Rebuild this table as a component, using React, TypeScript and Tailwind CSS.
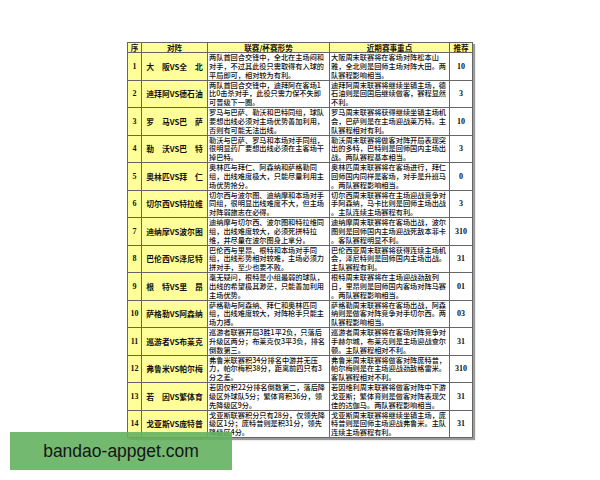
import React from "react";

type Row = { n: string; m: string; a: string[]; b: string[]; r: string };

const rows: Row[] = [
  { n: "1", m: "大　阪VS全　北", a: ["两队首回合交锋中，全北在主场闷和", "对手，不过其此役只需取得有入球的", "平局即可，相对较为有利。"], b: ["大阪周末联赛将在客场对阵松本山", "雅，全北则是回师主场对阵大田。两", "队赛程影响相当。"], r: "10" },
  { n: "2", m: "迪拜阿VS德石油", a: ["两队首回合交锋中，迪拜阿在客场1", "比0击杀对手，此役只需力保不失即", "可晋级下一圈。"], b: ["迪拜阿周末联赛将继续坐镇主场，德", "石油则是回国后继续做客，赛程显然", "不利。"], r: "3" },
  { n: "3", m: "罗　马VS巴　萨", a: ["罗马与巴萨、勒沃和巴特同组，球队", "要想出线必须对主场优势善加利用，", "否则有可能无法出线。"], b: ["罗马周末联赛将获得继续坐镇主场机", "会，巴萨则是在主场迎战莱万特。主", "队赛程相对有利。"], r: "10" },
  { n: "4", m: "勒　沃VS巴　特", a: ["勒沃与巴萨、罗马和本场对手同组，", "很明显药厂要想出线必须在主客场干", "掉巴特。"], b: ["勒沃周末联赛将做客对阵开局表现突", "出的多特，巴特则是回师国内主场出", "战。两队赛程基本相当。"], r: "3" },
  { n: "5", m: "奥林匹VS拜　仁", a: ["奥林匹与拜仁、阿森纳和萨格勒同", "组，出线难度极大，只能尽量利用主", "场优势抢分。"], b: ["奥林匹周末联赛将在客场进行，拜仁", "回师国内同样是客场，对手是升班马", "。两队赛程影响相当。"], r: "0" },
  { n: "6", m: "切尔西VS特拉维", a: ["切尔西与波尔图、迪纳摩和本场对手", "同组，很明显出线难度不大，但主场", "对阵弱旅志在必得。"], b: ["切尔西周末联赛将在主场迎战竞争对", "手阿森纳，马卡比则是回师主场出战", "。主队连续主场赛程有利。"], r: "3" },
  { n: "7", m: "迪纳摩VS波尔图", a: ["迪纳摩与切尔西、波尔图和特拉维同", "组，出线难度较大，必须死拼特拉", "维，并尽量在波尔图身上拿分。"], b: ["迪纳摩周末联赛将在客场出战，波尔", "图则是回师国内主场迎战死敌本菲卡", "。客队赛程明显不利。"], r: "310" },
  { n: "8", m: "巴伦西VS泽尼特", a: ["巴伦西与里昂、根特和本场对手同", "组，出线形势相对较难，主场必须力", "拼对手，至少也要不败。"], b: ["巴伦西亚周末联赛将获得连续主场机", "会，泽尼特则是回师国内主场出战。", "主队赛程有利。"], r: "31" },
  { n: "9", m: "根　特VS里　昂", a: ["毫无疑问，根特是小组最弱的球队，", "出线的希望极其渺茫，只能善加利用", "主场优势。"], b: ["根特周末联赛将在主场迎战劲敌列", "日，里昂则是回师国内客场对阵马赛", "。两队赛程影响相当。"], r: "01" },
  { n: "10", m: "萨格勒VS阿森纳", a: ["萨格勒与阿森纳、拜仁和奥林匹同", "组，出线难度较大，对阵枪手只能主", "场力搏。"], b: ["萨格勒周末联赛将在客场出战，阿森", "纳则是做客对阵竞争对手切尔西。两", "队赛程影响相当。"], r: "03" },
  { n: "11", m: "巡游者VS布莱克", a: ["巡游者联赛开局3胜1平2负，只落后", "升级区两分；布莱克仅3平3负，排名", "倒数第三。"], b: ["巡游者周末联赛将在客场对阵竞争对", "手赫尔城，布莱克则是主场迎战查尔", "顿。主队赛程相对不利。"], r: "31" },
  { n: "12", m: "弗鲁米VS帕尔梅", a: ["弗鲁米联赛积34分排名中游并无压", "力，帕尔梅积38分，距离前四只有3", "分之差。"], b: ["弗鲁米周末联赛将做客对阵庞特普，", "帕尔梅则是在主场迎战劲敌格雷米。", "客队赛程相对不利。"], r: "310" },
  { n: "13", m: "若　因VS繁体育", a: ["若因仅积22分排名倒数第二，落后降", "级区外球队5分；繁体育积36分，领", "先降级区9分。"], b: ["若因维利周末联赛将做客对阵中下游", "戈亚斯；繁体育则是做客对阵表现欠", "佳的达伽马。两队赛程影响相当。"], r: "31" },
  { n: "14", m: "戈亚斯VS庞特普", a: ["戈亚斯联赛积分只有28分，仅领先降", "级区1分；庞特普则是积31分，领先", "降级区4分。"], b: ["戈亚斯周末联赛将继续坐镇主场，庞", "特普则是回师主场迎战弗鲁米。主队", "连续主场赛程有利。"], r: "31" },
];

function Lines({ lines }: { lines: string[] }) {
  return (
    <div className="h-[26.5px] overflow-hidden">
      {lines.map((l, i) => (
        <div key={i} className="h-[8.83px] whitespace-nowrap leading-[8.83px]">
          {l}
        </div>
      ))}
    </div>
  );
}

export default function App() {
  return (
    <div className="relative w-[600px] h-[480px] overflow-hidden bg-white font-['Noto_Sans_CJK_SC',sans-serif] text-[#111]">
      <div className="pt-[42px] pl-[127px]">
        <table className="table-fixed border-collapse border border-[#333] shadow-[2px_2px_1px_#9a9a9a] text-[7.2px] font-medium leading-[8.83px]">
          <colgroup>
            <col className="w-[14px]" />
            <col className="w-[66px]" />
            <col className="w-[122px]" />
            <col className="w-[120px]" />
            <col className="w-[23px]" />
          </colgroup>
          <thead>
            <tr className="h-[10px] bg-[#ffff99] font-bold text-[7.6px]">
              <th className="border border-[#666] p-0 text-center">
                <div className="h-[9px] leading-[9px]">序</div>
              </th>
              <th className="border border-[#666] p-0 text-center">
                <div className="h-[9px] leading-[9px]">对阵</div>
              </th>
              <th className="border border-[#666] p-0 text-center">
                <div className="h-[9px] leading-[9px]">联赛/杯赛形势</div>
              </th>
              <th className="border border-[#666] p-0 text-center">
                <div className="h-[9px] leading-[9px]">近期赛事重点</div>
              </th>
              <th className="border border-[#666] p-0 text-center">
                <div className="h-[9px] leading-[9px]">推荐</div>
              </th>
            </tr>
          </thead>
          <tbody>
            {rows.map((row) => (
              <tr key={row.n}>
                <td className="border border-[#666] bg-[#ffff99] p-0 text-center font-bold font-['Liberation_Serif',serif] text-[8px]">
                  <div className="h-[9px] leading-[9px]">{row.n}</div>
                </td>
                <td className="border border-[#666] bg-[#ffff99] p-0 text-center font-bold text-[7.8px] whitespace-nowrap">
                  <div className="h-[9px] leading-[9px]">{row.m}</div>
                </td>
                <td className="border border-[#666] p-0 pl-[1px] align-top">
                  <Lines lines={row.a} />
                </td>
                <td className="border border-[#666] p-0 pl-[1px] align-top">
                  <Lines lines={row.b} />
                </td>
                <td className="border border-[#666] p-0 text-center font-bold font-['Liberation_Serif',serif] text-[8px]">
                  <div className="h-[9px] leading-[9px]">{row.r}</div>
                </td>
              </tr>
            ))}
          </tbody>
        </table>
      </div>
      <div className="absolute left-[10px] top-[432px] w-[222px] h-[38px] bg-[#65b160]/90 flex items-center justify-center">
        <span className="font-['Liberation_Sans',sans-serif] text-[17.5px] text-[#151515]">bandao-appget.com</span>
      </div>
    </div>
  );
}
